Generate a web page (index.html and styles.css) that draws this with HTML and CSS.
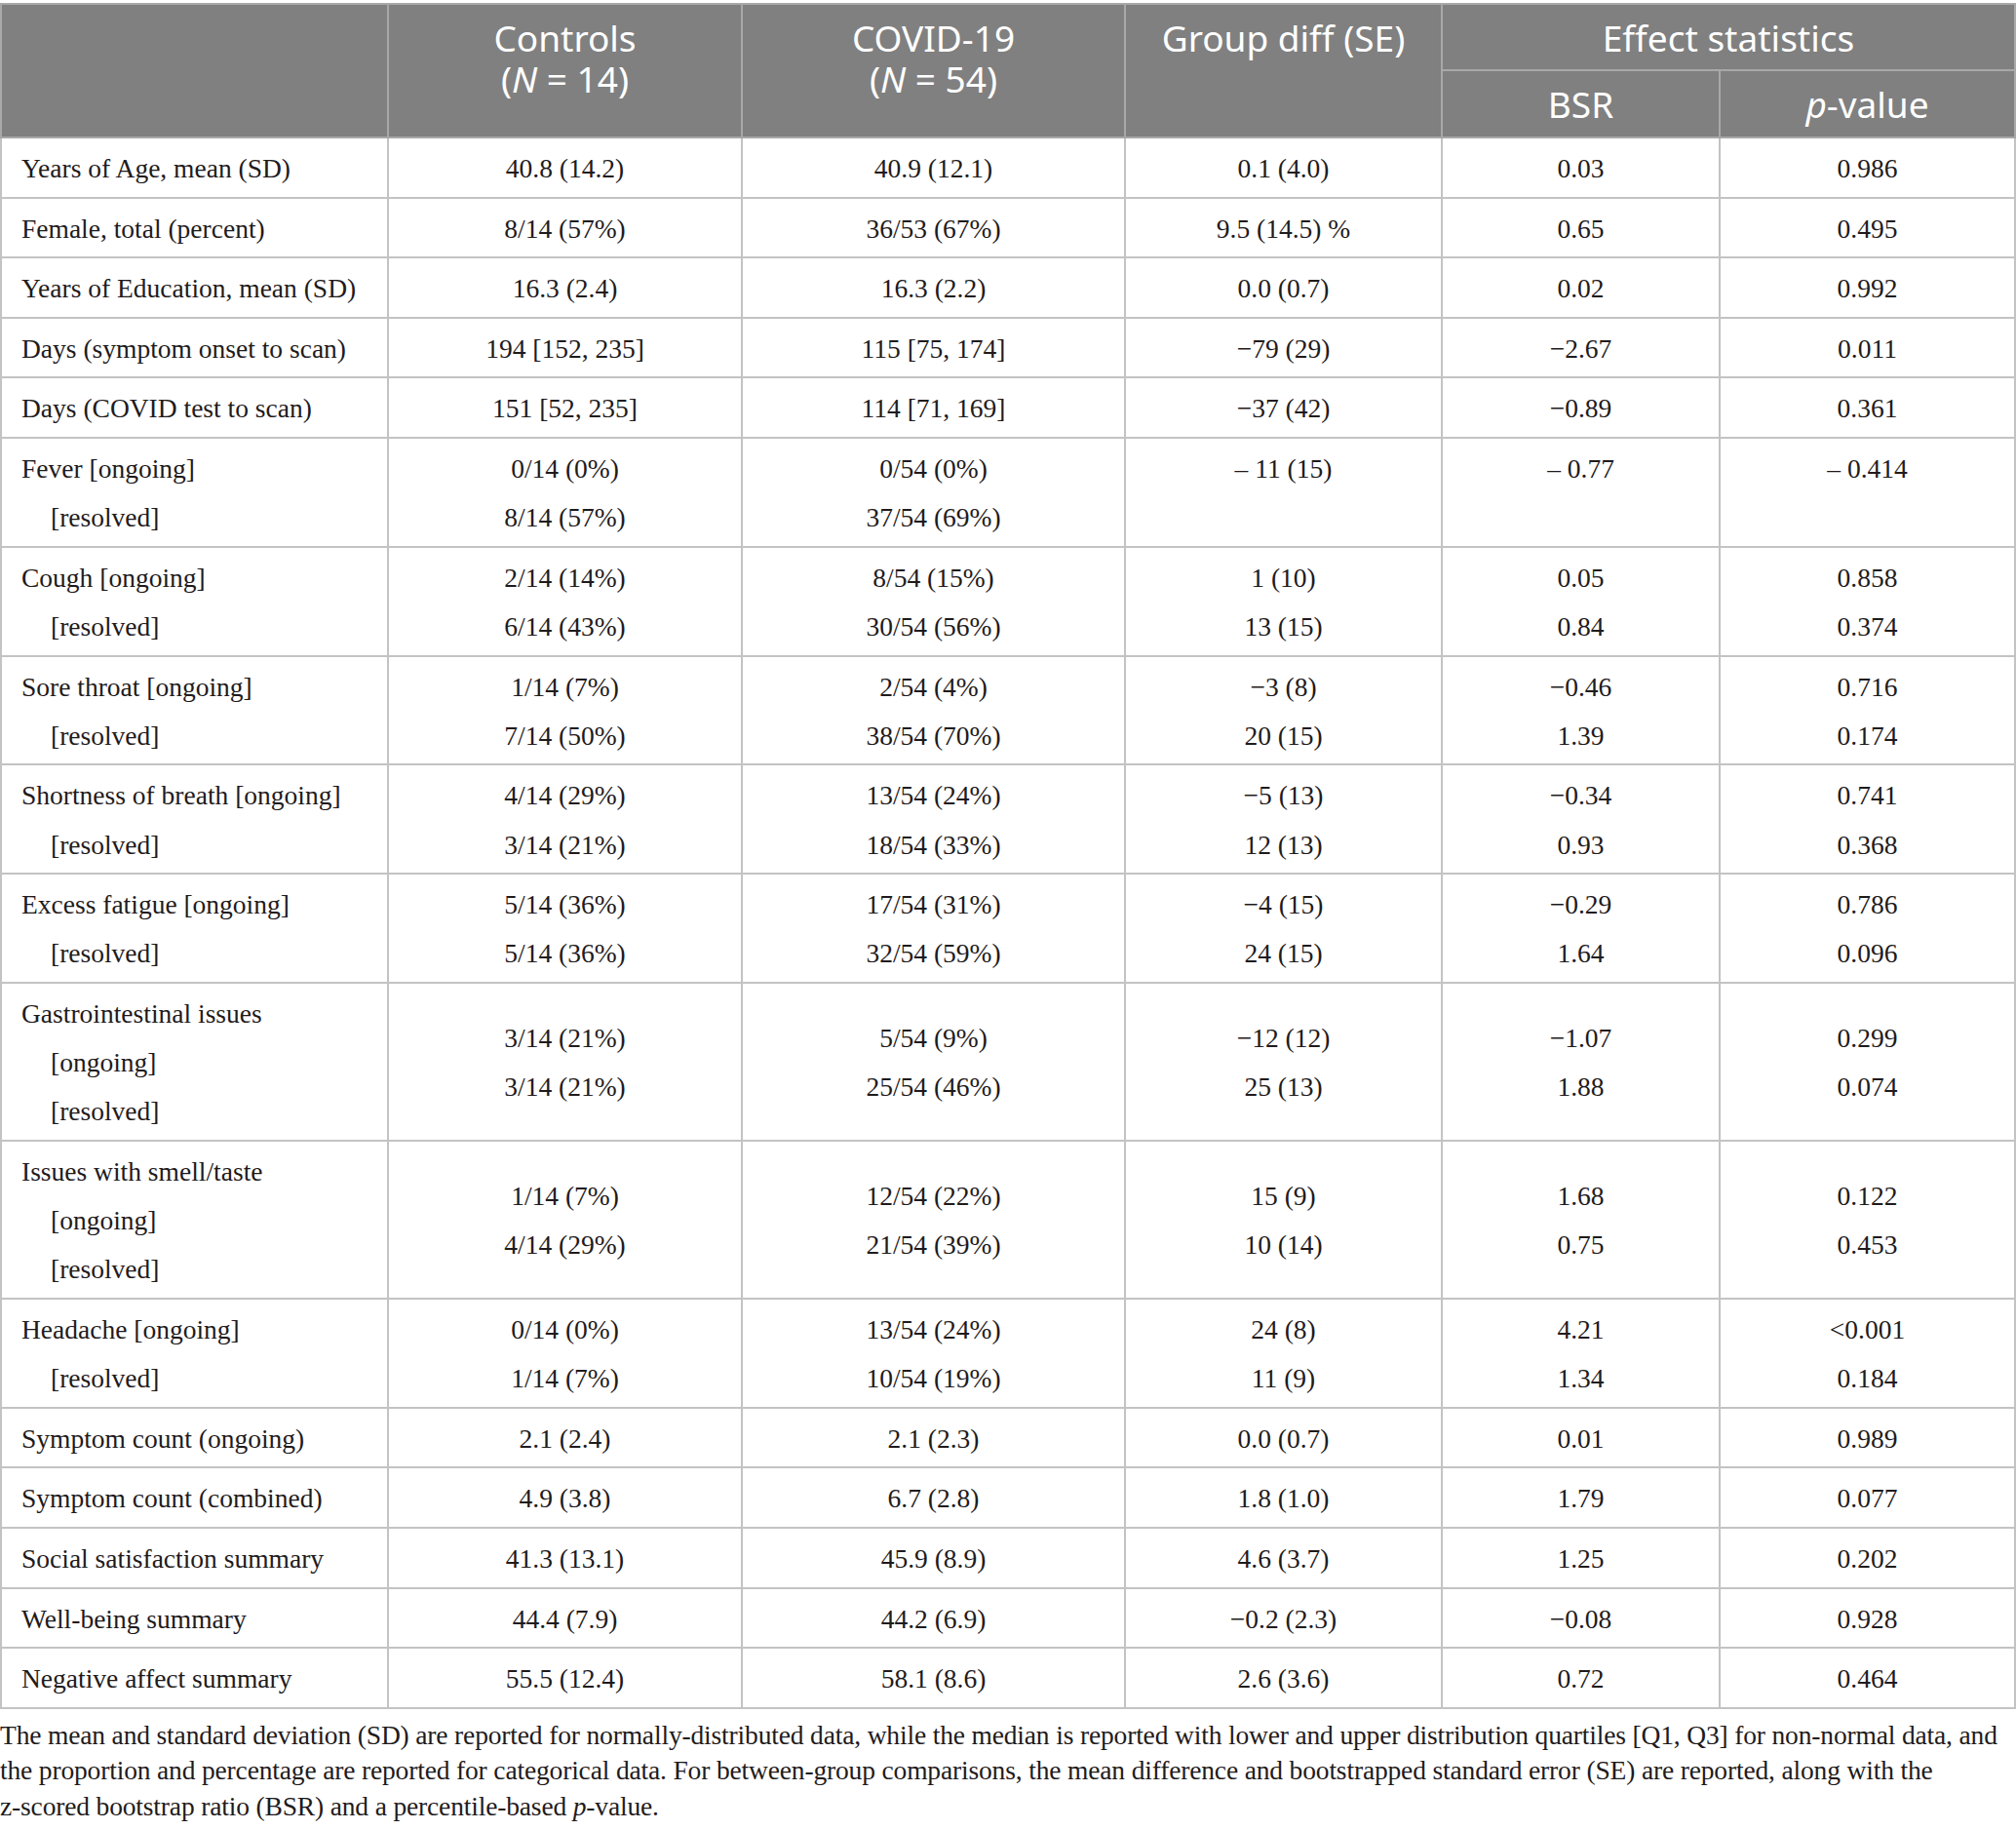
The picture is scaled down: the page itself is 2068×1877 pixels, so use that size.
FILE: index.html
```html
<!DOCTYPE html>
<html lang="en">
<head>
<meta charset="utf-8">
<title>Table</title>
<link rel="stylesheet" href="styles.css">
</head>
<body>
<table class="tbl">
  <colgroup>
    <col class="c1"><col class="c2"><col class="c3"><col class="c4"><col class="c5"><col class="c6">
  </colgroup>
  <thead>
    <tr class="hr1">
      <th rowspan="2" class="hmain"></th>
      <th rowspan="2" class="hmain"><span class="hl">Controls</span><span class="hl">(<i>N</i> = 14)</span></th>
      <th rowspan="2" class="hmain"><span class="hl">COVID-19</span><span class="hl">(<i>N</i> = 54)</span></th>
      <th rowspan="2" class="hmain"><span class="hl">Group diff (SE)</span></th>
      <th colspan="2" class="hmain"><span class="hl">Effect statistics</span></th>
    </tr>
    <tr class="hr2">
      <th class="hsub">BSR</th>
      <th class="hsub"><i>p</i>-value</th>
    </tr>
  </thead>
  <tbody>
    <tr><td class="lbl">Years of Age, mean (SD)</td><td>40.8 (14.2)</td><td>40.9 (12.1)</td><td>0.1 (4.0)</td><td>0.03</td><td>0.986</td></tr>
    <tr><td class="lbl">Female, total (percent)</td><td>8/14 (57%)</td><td>36/53 (67%)</td><td>9.5 (14.5) %</td><td>0.65</td><td>0.495</td></tr>
    <tr><td class="lbl">Years of Education, mean (SD)</td><td>16.3 (2.4)</td><td>16.3 (2.2)</td><td>0.0 (0.7)</td><td>0.02</td><td>0.992</td></tr>
    <tr><td class="lbl">Days (symptom onset to scan)</td><td>194 [152, 235]</td><td>115 [75, 174]</td><td>−79 (29)</td><td>−2.67</td><td>0.011</td></tr>
    <tr><td class="lbl">Days (COVID test to scan)</td><td>151 [52, 235]</td><td>114 [71, 169]</td><td>−37 (42)</td><td>−0.89</td><td>0.361</td></tr>
    <tr><td class="lbl">Fever [ongoing]<div class="sub">[resolved]</div></td><td>0/14 (0%)<br>8/14 (57%)</td><td>0/54 (0%)<br>37/54 (69%)</td><td class="top">– 11 (15)</td><td class="top">– 0.77</td><td class="top">– 0.414</td></tr>
    <tr><td class="lbl">Cough [ongoing]<div class="sub">[resolved]</div></td><td>2/14 (14%)<br>6/14 (43%)</td><td>8/54 (15%)<br>30/54 (56%)</td><td>1 (10)<br>13 (15)</td><td>0.05<br>0.84</td><td>0.858<br>0.374</td></tr>
    <tr><td class="lbl">Sore throat [ongoing]<div class="sub">[resolved]</div></td><td>1/14 (7%)<br>7/14 (50%)</td><td>2/54 (4%)<br>38/54 (70%)</td><td>−3 (8)<br>20 (15)</td><td>−0.46<br>1.39</td><td>0.716<br>0.174</td></tr>
    <tr><td class="lbl">Shortness of breath [ongoing]<div class="sub">[resolved]</div></td><td>4/14 (29%)<br>3/14 (21%)</td><td>13/54 (24%)<br>18/54 (33%)</td><td>−5 (13)<br>12 (13)</td><td>−0.34<br>0.93</td><td>0.741<br>0.368</td></tr>
    <tr><td class="lbl">Excess fatigue [ongoing]<div class="sub">[resolved]</div></td><td>5/14 (36%)<br>5/14 (36%)</td><td>17/54 (31%)<br>32/54 (59%)</td><td>−4 (15)<br>24 (15)</td><td>−0.29<br>1.64</td><td>0.786<br>0.096</td></tr>
    <tr><td class="lbl">Gastrointestinal issues<div class="sub">[ongoing]</div><div class="sub">[resolved]</div></td><td>3/14 (21%)<br>3/14 (21%)</td><td>5/54 (9%)<br>25/54 (46%)</td><td>−12 (12)<br>25 (13)</td><td>−1.07<br>1.88</td><td>0.299<br>0.074</td></tr>
    <tr><td class="lbl">Issues with smell/taste<div class="sub">[ongoing]</div><div class="sub">[resolved]</div></td><td>1/14 (7%)<br>4/14 (29%)</td><td>12/54 (22%)<br>21/54 (39%)</td><td>15 (9)<br>10 (14)</td><td>1.68<br>0.75</td><td>0.122<br>0.453</td></tr>
    <tr><td class="lbl">Headache [ongoing]<div class="sub">[resolved]</div></td><td>0/14 (0%)<br>1/14 (7%)</td><td>13/54 (24%)<br>10/54 (19%)</td><td>24 (8)<br>11 (9)</td><td>4.21<br>1.34</td><td>&lt;0.001<br>0.184</td></tr>
    <tr><td class="lbl">Symptom count (ongoing)</td><td>2.1 (2.4)</td><td>2.1 (2.3)</td><td>0.0 (0.7)</td><td>0.01</td><td>0.989</td></tr>
    <tr><td class="lbl">Symptom count (combined)</td><td>4.9 (3.8)</td><td>6.7 (2.8)</td><td>1.8 (1.0)</td><td>1.79</td><td>0.077</td></tr>
    <tr><td class="lbl">Social satisfaction summary</td><td>41.3 (13.1)</td><td>45.9 (8.9)</td><td>4.6 (3.7)</td><td>1.25</td><td>0.202</td></tr>
    <tr><td class="lbl">Well-being summary</td><td>44.4 (7.9)</td><td>44.2 (6.9)</td><td>−0.2 (2.3)</td><td>−0.08</td><td>0.928</td></tr>
    <tr><td class="lbl">Negative affect summary</td><td>55.5 (12.4)</td><td>58.1 (8.6)</td><td>2.6 (3.6)</td><td>0.72</td><td>0.464</td></tr>
  </tbody>
</table>
<div class="note">
  <span class="ln">The mean and standard deviation (SD) are reported for normally-distributed data, while the median is reported with lower and upper distribution quartiles [Q1, Q3] for non-normal data, and</span>
  <span class="ln">the proportion and percentage are reported for categorical data. For between-group comparisons, the mean difference and bootstrapped standard error (SE) are reported, along with the</span>
  <span class="ln">z-scored bootstrap ratio (BSR) and a percentile-based <i>p</i>-value.</span>
</div>
</body>
</html>
```

FILE: styles.css
```css
html, body {
  margin: 0;
  padding: 0;
  background: #ffffff;
}
body {
  padding-top: 3px;
  font-family: "Liberation Serif", "Times New Roman", serif;
  color: #1f1b1c;
}
.tbl {
  border-collapse: collapse;
  table-layout: fixed;
  width: 2066px;
}
.c1 { width: 397px; }
.c2 { width: 363px; }
.c3 { width: 393px; }
.c4 { width: 325px; }
.c5 { width: 285px; }
.c6 { width: 303px; }

thead th {
  background: #808080;
  color: #ffffff;
  font-family: "Noto Sans", "Open Sans", sans-serif;
  font-weight: 400;
  font-size: 37px;
  line-height: 42px;
  border: 2px solid #a8a8a8;
  padding: 0;
  text-align: center;
}
.hr1 { height: 68px; }
.hr2 { height: 69px; }
th.hmain {
  vertical-align: top;
  padding-top: 13px;
}
th.hsub {
  vertical-align: middle;
}
.hl {
  display: block;
  height: 42px;
}

tbody td {
  font-size: 27.5px;
  line-height: 50.2px;
  padding: 6px 0 3.4px;
  border: 2px solid #c3c3c3;
  text-align: center;
  vertical-align: middle;
  white-space: nowrap;
}
tbody td.lbl {
  text-align: left;
  padding-left: 20px;
}
tbody td.top {
  vertical-align: top;
}
.sub {
  padding-left: 30px;
}

.note {
  margin-top: 9px;
  font-size: 27.5px;
  line-height: 36.7px;
  letter-spacing: -0.16px;
}
.ln {
  display: block;
  white-space: nowrap;
}
```
